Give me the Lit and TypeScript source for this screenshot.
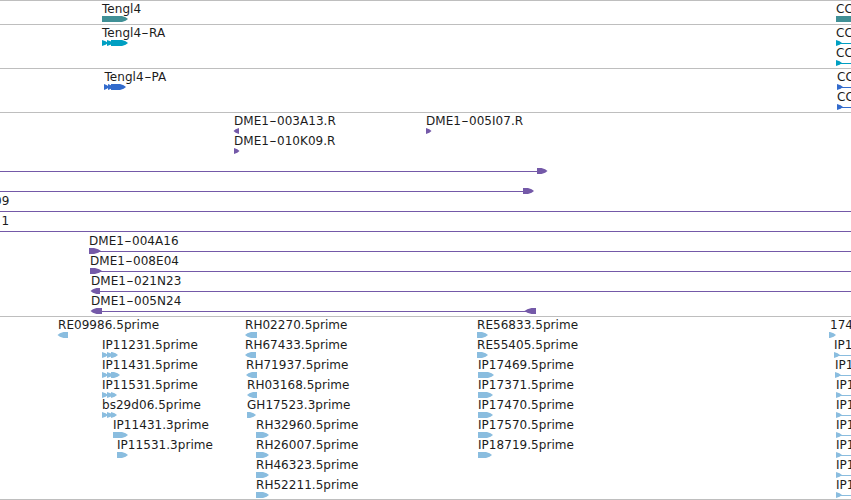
import { LitElement, html, svg, css } from "lit";
import { customElement, property } from "lit/decorators.js";

// A segment is [start, end, strand, head length]
type Segment = [number, number, 1 | -1, number];
interface Feature {
  label?: string;
  x: number;
  segments?: Segment[];
  line?: [number, number];
}
interface Track {
  color: string;
  rows: Feature[][];
}

const WIDTH = 851;
const f = (label: string, x: number, segments: Segment[] = [], line?: [number, number]): Feature => ({ label, x, segments, line });
const exonRun = (end: number): Segment[] => [[102, 108, 1, 6], [107, 113, 1, 6], [111, end, 1, 6]];
const cut = (label: string, x: number, at: number): Feature => f(label, x, [[at, at + 6, 1, 6]], [at, WIDTH]);

const tracks: Track[] = [
  { color: "#409096", rows: [[f("Tengl4", 102, [[102, 128, 1, 6]]), f("CC", 836, [[836, 860, 1, 6]])]] },
  {
    color: "#009fc2",
    rows: [
      [f("Tengl4-RA", 102, [[102, 108, 1, 6], [107, 113, 1, 6], [111, 128, 1, 6]]), cut("CC", 836, 836)],
      [cut("CC", 836, 836)],
    ],
  },
  {
    color: "#336bcc",
    rows: [
      [f("Tengl4-PA", 104.5, [[104, 109, 1, 5], [108, 113, 1, 5], [111, 126, 1, 6]]), cut("CC", 837, 837)],
      [cut("CC", 837, 837)],
    ],
  },
  {
    color: "#7459a8",
    rows: [
      [f("DME1-003A13.R", 234, [[233.5, 239, -1, 5.5]]), f("DME1-005I07.R", 426, [[426, 431.5, 1, 5.5]])],
      [f("DME1-010K09.R", 234, [[234, 239.5, 1, 5.5]])],
      [f("", 0, [[537, 547.5, 1, 6]], [0, 540])],
      [f("", 0, [[523, 534, 1, 6]], [0, 527])],
      [f("09", -6, [], [0, WIDTH])],
      [f("1", 1.5, [], [0, WIDTH])],
      [f("DME1-004A16", 89, [[89, 101, 1, 7]], [95, WIDTH])],
      [f("DME1-008E04", 90, [[90, 102, 1, 7]], [96, WIDTH])],
      [f("DME1-021N23", 91, [[90.5, 100, -1, 6]], [96, WIDTH])],
      [f("DME1-005N24", 91, [[90.5, 102, -1, 6], [524.5, 536, -1, 7]], [96, 530])],
    ],
  },
  {
    color: "#8abddf",
    rows: [
      [f("RE09986.5prime", 58, [[57.5, 68, -1, 6]]), f("RH02270.5prime", 245, [[245, 257, -1, 6]]), f("RE56833.5prime", 477, [[477, 488, 1, 6]]), f("174", 830, [[829, 836, 1, 6]])],
      [f("IP11231.5prime", 102, exonRun(118)), f("RH67433.5prime", 245, [[245, 256, -1, 6]]), f("RE55405.5prime", 477, [[477, 488, 1, 6]]), cut("IP1", 834, 834)],
      [f("IP11431.5prime", 102, exonRun(120)), f("RH71937.5prime", 246, [[246, 257, -1, 6]]), f("IP17469.5prime", 478, [[478, 494, 1, 6]]), cut("IP1", 835, 835)],
      [f("IP11531.5prime", 102, exonRun(117)), f("RH03168.5prime", 247, [[247, 257, -1, 6]]), f("IP17371.5prime", 478, [[478, 493, 1, 6]]), cut("IP1", 836, 836)],
      [f("bs29d06.5prime", 102, exonRun(117)), f("GH17523.3prime", 247, [[247, 256, 1, 6]]), f("IP17470.5prime", 478, [[478, 493, 1, 6]]), cut("IP1", 836, 836)],
      [f("IP11431.3prime", 113, [[113, 128, 1, 6]]), f("RH32960.5prime", 256, [[256, 269, 1, 6]]), f("IP17570.5prime", 478, [[478, 493, 1, 6]]), cut("IP1", 836, 836)],
      [f("IP11531.3prime", 117, [[117, 128, 1, 6]]), f("RH26007.5prime", 256, [[256, 269, 1, 6]]), f("IP18719.5prime", 478, [[478, 492, 1, 6]]), cut("IP1", 836, 836)],
      [f("RH46323.5prime", 256, [[256, 269, 1, 6]]), cut("IP1", 836, 836)],
      [f("RH52211.5prime", 256, [[256, 269, 1, 6]]), cut("IP1", 836, 836)],
    ],
  },
];

@customElement("feature-row")
export class FeatureRow extends LitElement {
  @property({ attribute: false }) features: Feature[] = [];
  @property() color = "";

  static styles = css`
    :host { display: block; position: relative; height: 20px; }
    svg { position: absolute; left: 0; top: 0; display: block; overflow: visible; }
    .label {
      position: absolute;
      top: 2px;
      font: 12px/14px "DejaVu Sans", sans-serif;
      letter-spacing: 0.04px;
      color: #1c1c1c;
      white-space: pre;
    }
    .dash { display: inline-block; width: 8px; text-align: center; transform: scaleX(1.7); }
  `;

  // Block with a slightly rounded arrowhead at its strand end
  private shape([a, b, dir, head]: Segment) {
    const tip = dir === 1 ? b : a;
    const tail = dir === 1 ? a : b;
    const neck = tip - dir * head;
    const mid = tip - dir * head * 0.4;
    const pts = [[tail, 16], [neck, 16], [mid, 17.3], [tip, 19], [mid, 20.7], [neck, 22], [tail, 22]];
    return svg`<polygon points=${pts.map((p) => p.join(",")).join(" ")} fill=${this.color}></polygon>`;
  }

  render() {
    return html`
      <svg width=${WIDTH} height="24">
        ${this.features.map((x) => svg`
          ${x.line ? svg`<rect x=${x.line[0]} y="19" width=${x.line[1] - x.line[0]} height="1" fill=${this.color}></rect>` : null}
          ${(x.segments ?? []).map((s) => this.shape(s))}`)}
      </svg>
      ${this.features.map((x) => html`<span class="label" style="left:${x.x}px">${(x.label ?? "")
        .split("-")
        .map((part, i) => (i ? html`<span class="dash">-</span>${part}` : part))}</span>`)}
    `;
  }
}

@customElement("app-root")
export class AppRoot extends LitElement {
  static styles = css`
    :host { display: block; width: 851px; height: 500px; overflow: hidden; background: #fff; }
    .view { display: flex; flex-direction: column; height: 500px; }
    .track { position: relative; box-sizing: border-box; flex: none; padding-bottom: 4px; box-shadow: inset 0 1px #bebebe; }
    .track:last-child { box-shadow: inset 0 1px #bebebe, inset 0 -1px #bebebe; }
  `;

  render() {
    return html`<div class="view">
      ${tracks.map((t) => html`<section class="track">
        ${t.rows.map((r) => html`<feature-row .features=${r} color=${t.color}></feature-row>`)}
      </section>`)}
    </div>`;
  }
}
